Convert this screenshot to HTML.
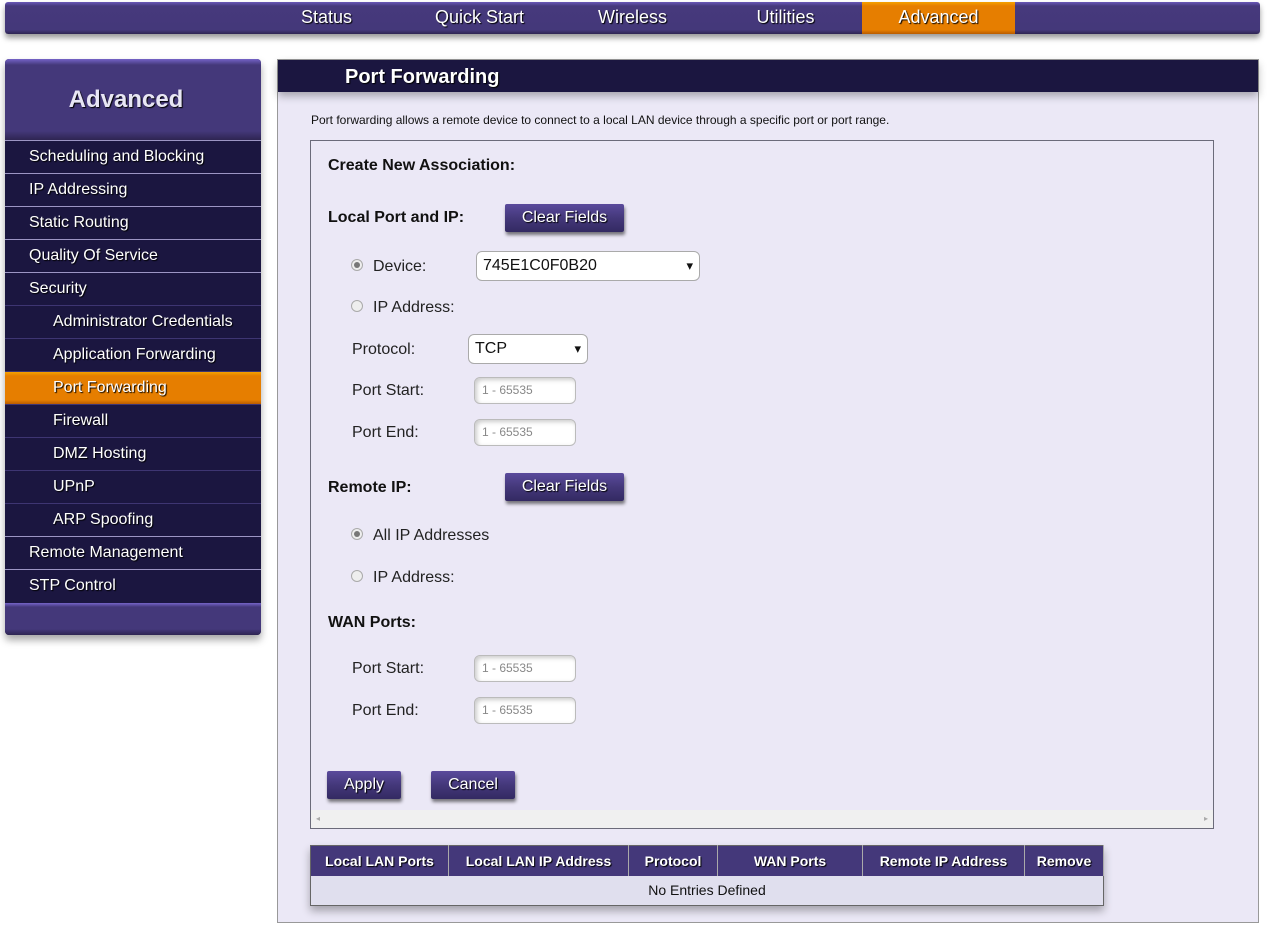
<!DOCTYPE html>
<html><head><style>
*{box-sizing:border-box;margin:0;padding:0}
body{width:1268px;height:930px;background:#fff;font-family:"Liberation Sans",Arial,sans-serif;position:relative;overflow:hidden}
.abs{position:absolute}
.nav{left:5px;top:2px;width:1255px;height:32px;background:linear-gradient(#6a58b8 0,#46397c 4px,#44387a 28px,#2e2552);border-radius:3px;box-shadow:0 4px 6px rgba(0,0,0,.4)}
.tab{position:absolute;top:0;height:32px;width:153px;text-align:center;color:#fff;font-size:18px;line-height:30px;text-shadow:1px 1px 1px #000}
.tab.on{background:linear-gradient(#f5a200 0,#e67e00 4px,#e67e00 28px,#b85c00)}
.side{left:5px;top:59px;width:256px;height:576px;background:#1b1640;border-radius:4px;box-shadow:0 5px 8px rgba(0,0,0,.35);overflow:hidden}
.sh{height:81px;background:linear-gradient(#7563c8 0,#44387a 6px,#44387a 72px,#2e2552);color:#e8e6f4;font-weight:bold;font-size:24px;text-align:center;line-height:82px;padding-right:14px;text-shadow:1px 1px 1px #000}
.it{height:33px;border-top:1px solid #9c95c4;color:#fff;font-size:16px;line-height:32px;padding-left:24px;text-shadow:1px 1px 1px #000}
.it.sub{padding-left:48px;border-top-color:#3e3572}
.it.on{background:linear-gradient(#f5a200 0,#e67e00 4px,#e67e00 28px,#b85c00);border-top-color:#3e3572}
.sb{position:absolute;left:0;bottom:0;width:256px;height:32px;background:linear-gradient(#7563c8 0,#44387a 4px,#44387a 26px,#2e2552)}
.main{left:277px;top:59px;width:982px;height:864px;background:#ebe8f6;border:1px solid #999}
.mh{height:32px;background:#1b1640;color:#fff;font-weight:bold;font-size:20px;line-height:34px;padding-left:67px;box-shadow:0 4px 8px rgba(0,0,0,.3);text-shadow:1px 1px 1px #000}
.t{position:absolute;font-size:16px;color:#222}
.b{position:absolute;font-size:16px;font-weight:bold;color:#111}
.btn{position:absolute;height:28px;background:linear-gradient(#5a4a9c,#44387a 50%,#332a62);color:#fff;font-size:16px;text-align:center;line-height:27px;border-radius:2px;box-shadow:1px 3px 3px rgba(0,0,0,.5);text-shadow:1px 1px 1px #000}
.radio{position:absolute;width:12px;height:12px;border-radius:50%;border:1px solid #aaa;background:#eee}
.radio.on::after{content:"";position:absolute;left:2px;top:2px;width:6px;height:6px;border-radius:50%;background:#777}
.sel{position:absolute;height:30px;background:#fff;border:1px solid #aaa;border-radius:6px;font-size:16px;line-height:28px;padding-left:6px;color:#111}
.sel::after{content:"▾";position:absolute;right:6px;top:0;font-size:13px}
.inp{position:absolute;width:102px;height:27px;border:1px solid #bbb;border-radius:6px;background:#fff;box-shadow:inset 2px 2px 4px #ccc;font-size:12px;color:#888;line-height:25px;padding-left:7px}
th{background:#44387a;color:#fff;font-size:14px;font-weight:bold;height:30px;border-right:1px solid #aaa;text-shadow:1px 1px 1px #000}
</style></head><body>
<div class="abs nav">
<div class="tab" style="left:245px">Status</div>
<div class="tab" style="left:398px">Quick Start</div>
<div class="tab" style="left:551px">Wireless</div>
<div class="tab" style="left:704px">Utilities</div>
<div class="tab on" style="left:857px">Advanced</div>
</div>
<div class="abs side">
<div class="sh">Advanced</div>
<div class="it">Scheduling and Blocking</div>
<div class="it">IP Addressing</div>
<div class="it">Static Routing</div>
<div class="it">Quality Of Service</div>
<div class="it">Security</div>
<div class="it sub">Administrator Credentials</div>
<div class="it sub">Application Forwarding</div>
<div class="it sub on">Port Forwarding</div>
<div class="it sub">Firewall</div>
<div class="it sub">DMZ Hosting</div>
<div class="it sub">UPnP</div>
<div class="it sub">ARP Spoofing</div>
<div class="it">Remote Management</div>
<div class="it">STP Control</div>
<div class="sb"></div>
</div>
<div class="abs main">
<div class="mh">Port Forwarding</div>
<div class="abs" style="left:33px;top:53px;font-size:12px;color:#111">Port forwarding allows a remote device to connect to a local LAN device through a specific port or port range.</div>
<div class="abs" style="left:32px;top:80px;width:904px;height:689px;border:1px solid #6b6b7a">
<div class="abs" style="left:0;bottom:0;width:902px;height:18px;background:#f0f0f0;font-size:8px;color:#aaa;line-height:18px"><span style="position:absolute;left:5px">◂</span><span style="position:absolute;right:5px">▸</span></div>
</div>
</div>
<div class="b" style="left:328px;top:157px">Create New Association:</div>
<div class="b" style="left:328px;top:209px">Local Port and IP:</div>
<div class="btn" style="left:505px;top:204px;width:119px">Clear Fields</div>
<div class="radio on" style="left:351px;top:259px"></div><div class="t" style="left:373px;top:258px">Device:</div>
<div class="sel" style="left:476px;top:251px;width:224px">745E1C0F0B20</div>
<div class="radio" style="left:351px;top:300px"></div><div class="t" style="left:373px;top:299px">IP Address:</div>
<div class="t" style="left:352px;top:341px">Protocol:</div>
<div class="sel" style="left:468px;top:334px;width:120px">TCP</div>
<div class="t" style="left:352px;top:382px">Port Start:</div><div class="inp" style="left:474px;top:377px">1 - 65535</div>
<div class="t" style="left:352px;top:424px">Port End:</div><div class="inp" style="left:474px;top:419px">1 - 65535</div>
<div class="b" style="left:328px;top:479px">Remote IP:</div>
<div class="btn" style="left:505px;top:473px;width:119px">Clear Fields</div>
<div class="radio on" style="left:351px;top:528px"></div><div class="t" style="left:373px;top:527px">All IP Addresses</div>
<div class="radio" style="left:351px;top:570px"></div><div class="t" style="left:373px;top:569px">IP Address:</div>
<div class="b" style="left:328px;top:614px">WAN Ports:</div>
<div class="t" style="left:352px;top:660px">Port Start:</div><div class="inp" style="left:474px;top:655px">1 - 65535</div>
<div class="t" style="left:352px;top:702px">Port End:</div><div class="inp" style="left:474px;top:697px">1 - 65535</div>
<div class="btn" style="left:327px;top:771px;width:74px">Apply</div>
<div class="btn" style="left:431px;top:771px;width:84px">Cancel</div>
<table class="abs" style="left:310px;top:845px;width:794px;border-collapse:collapse;border:1px solid #666;box-shadow:0 5px 8px rgba(0,0,0,.3)">
<tr><th style="width:138px">Local LAN Ports</th><th style="width:180px">Local LAN IP Address</th><th style="width:89px">Protocol</th><th style="width:145px">WAN Ports</th><th style="width:162px">Remote IP Address</th><th>Remove</th></tr>
<tr><td colspan="6" style="background:#e0dfee;height:30px;text-align:center;font-size:14px;color:#111">No Entries Defined</td></tr>
</table>
</body></html>
